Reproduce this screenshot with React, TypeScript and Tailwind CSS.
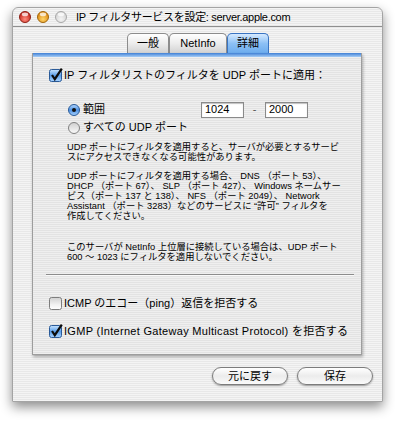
import React from 'react'

// Aqua-style "IP filter service" settings window (Mac OS X 10.2 era)

const stripes =
  'bg-[repeating-linear-gradient(180deg,#f4f4f4_0px,#f4f4f4_1px,#e8e8e8_1px,#e8e8e8_2px)]'
const panelStripes =
  'bg-[repeating-linear-gradient(180deg,#efefef_0px,#efefef_1px,#e3e3e3_1px,#e3e3e3_2px)]'

function Light({ from, to, edge }: { from: string; to: string; edge: string }) {
  return (
    <svg width="12" height="12" viewBox="0 0 12 12">
      <defs>
        <radialGradient id={`l${from}`} cx="0.5" cy="0.7" r="0.6">
          <stop offset="0" stopColor={to} />
          <stop offset="1" stopColor={from} />
        </radialGradient>
      </defs>
      <circle cx="6" cy="6" r="5.5" fill={`url(#l${from})`} stroke={edge} />
      <ellipse cx="6" cy="3.4" rx="3.2" ry="1.8" fill="#fff" opacity="0.75" />
    </svg>
  )
}

function Checkbox({ checked }: { checked: boolean }) {
  return (
    <svg width="14" height="14" viewBox="0 0 14 14" className="shrink-0">
      <defs>
        <linearGradient id="cbOn" x1="0" y1="0" x2="0" y2="1">
          <stop offset="0" stopColor="#c9e4ff" />
          <stop offset="0.5" stopColor="#5b9fea" />
          <stop offset="1" stopColor="#a9d3ff" />
        </linearGradient>
        <linearGradient id="cbOff" x1="0" y1="0" x2="0" y2="1">
          <stop offset="0" stopColor="#d0d0d0" />
          <stop offset="0.6" stopColor="#f2f2f2" />
          <stop offset="1" stopColor="#ffffff" />
        </linearGradient>
      </defs>
      <rect
        x="0.5"
        y="1.5"
        width="12"
        height="12"
        rx="2"
        fill={checked ? 'url(#cbOn)' : 'url(#cbOff)'}
        stroke={checked ? '#2a5a98' : '#7d7d7d'}
      />
      {checked && <path d="M3 7 L5.8 11.2 L12.8 0.6" stroke="#0d0d0d" strokeWidth="2.2" fill="none" />}
    </svg>
  )
}

function Radio({ on }: { on: boolean }) {
  return (
    <svg width="12" height="12" viewBox="0 0 12 12" className="shrink-0">
      <defs>
        <linearGradient id="rOn" x1="0" y1="0" x2="0" y2="1">
          <stop offset="0" stopColor="#b7d9ff" />
          <stop offset="0.5" stopColor="#4f93e4" />
          <stop offset="1" stopColor="#a7d2ff" />
        </linearGradient>
        <linearGradient id="rOff" x1="0" y1="0" x2="0" y2="1">
          <stop offset="0" stopColor="#cfcfcf" />
          <stop offset="1" stopColor="#fbfbfb" />
        </linearGradient>
      </defs>
      <circle cx="6" cy="6" r="5.5" fill={on ? 'url(#rOn)' : 'url(#rOff)'} stroke={on ? '#2a5a98' : '#808080'} />
      {on && <circle cx="6" cy="6" r="2" fill="#111" />}
    </svg>
  )
}

function Tab({ label, active }: { label: string; active?: boolean }) {
  return (
    <div
      className={
        'flex h-[20px] items-center justify-center rounded-t-[5px] border border-b-0 text-[11px] ' +
        (active
          ? 'border-[#3a74c2] bg-gradient-to-b from-[#d6eaff] via-[#8cc0f5] to-[#6cacee]'
          : 'border-[#8c8c8c] bg-gradient-to-b from-[#ffffff] via-[#ececec] to-[#d2d2d2]')
      }
    >
      {label}
    </div>
  )
}

function PushButton({ label }: { label: string }) {
  return (
    <div className="flex h-[18px] w-[76px] items-center justify-center rounded-full border border-[#7c7c7c] bg-gradient-to-b from-[#ffffff] via-[#ececec] to-[#fafafa] text-[11px] shadow-[0_1px_2px_rgba(0,0,0,0.35)]">
      {label}
    </div>
  )
}

export default function App() {
  return (
    <div className="h-[421px] w-[395px] bg-white pl-[12px] pt-[7px] font-['Liberation_Sans','Noto_Sans_CJK_JP',sans-serif] text-black">
      <div
        className={`flex h-[395px] w-[371px] flex-col rounded-t-[6px] border border-[#a4a4a4] ${stripes} shadow-[0_5px_12px_rgba(0,0,0,0.45)]`}
      >
        {/* Title bar */}
        <div className="flex h-[19px] items-center gap-[6px] border-b border-[#8f8f8f] pl-[6px]">
          <Light from="#c5261c" to="#ff8c7e" edge="#8d2218" />
          <Light from="#dd8a12" to="#ffd56a" edge="#a0670f" />
          <Light from="#d4d4d4" to="#f4f4f4" edge="#a8a8a8" />
          <span className="ml-[3px] pt-[1px] text-[11px] leading-none tracking-[-0.3px]">
            IP フィルタサービスを設定: server.apple.com
          </span>
        </div>

        {/* Tabs */}
        <div className="mt-[6px] flex justify-center pl-[1px]">
          <div className="w-[42px]">
            <Tab label="一般" />
          </div>
          <div className="w-[58px]">
            <Tab label="NetInfo" />
          </div>
          <div className="w-[42px]">
            <Tab label="詳細" active />
          </div>
        </div>

        {/* Panel */}
        <div
          className={`ml-[19px] flex h-[302px] w-[330px] flex-col border-x border-b border-[#9d9d9d] ${panelStripes} shadow-[1px_2px_3px_rgba(0,0,0,0.3)]`}
        >
          <div className="h-[4px] bg-gradient-to-b from-[#3f7fd4] to-[#a6cdf6]" />

          <div className="mt-[10px] flex items-center gap-[1px] pl-[16px] text-[11px]">
            <Checkbox checked />
            <span>IP フィルタリストのフィルタを UDP ポートに適用：</span>
          </div>

          <div className="mt-[18px] flex h-[16px] items-center pl-[35px] text-[11px]">
            <Radio on />
            <span className="ml-[3px] w-[118px]">範囲</span>
            <div className="flex h-[16px] w-[43px] items-center border border-[#8a8a8a] bg-white pl-[3px] shadow-[inset_0_1px_1px_rgba(0,0,0,0.25)]">
              1024
            </div>
            <span className="w-[21px] text-center text-[#555]">-</span>
            <div className="flex h-[16px] w-[43px] items-center border border-[#8a8a8a] bg-white pl-[3px] shadow-[inset_0_1px_1px_rgba(0,0,0,0.25)]">
              2000
            </div>
          </div>

          <div className="mt-[3px] flex h-[14px] items-center pl-[35px] text-[11px]">
            <Radio on={false} />
            <span className="ml-[3px]">すべての UDP ポート</span>
          </div>

          <div className="mt-[7px] whitespace-nowrap pl-[34px] text-[9.3px] leading-[10px]">
            <div>UDP ポートにフィルタを適用すると、サーバが必要とするサービ</div>
            <div>スにアクセスできなくなる可能性があります。</div>
          </div>

          <div className="mt-[9px] whitespace-nowrap pl-[34px] text-[9.3px] leading-[10px]">
            <div>UDP ポートにフィルタを適用する場合、 DNS （ポート 53）、</div>
            <div>DHCP （ポート 67）、 SLP （ポート 427）、 Windows ネームサー</div>
            <div>ビス（ポート 137 と 138）、 NFS （ポート 2049）、 Network</div>
            <div>Assistant （ポート 3283）などのサービスに “許可” フィルタを</div>
            <div>作成してください。</div>
          </div>

          <div className="mt-[21px] whitespace-nowrap pl-[34px] text-[9.3px] leading-[10px]">
            <div>このサーバが NetInfo 上位層に接続している場合は、UDP ポート</div>
            <div>600 〜 1023 にフィルタを適用しないでください。</div>
          </div>

          <div className="ml-[13px] mt-[12px] h-[2px] w-[308px] border-t border-b border-t-[#8c8c8c] border-b-[#fafafa]" />

          <div className="mt-[19px] flex items-center gap-[1px] pl-[16px] text-[11px]">
            <Checkbox checked={false} />
            <span>ICMP のエコー（ping）返信を拒否する</span>
          </div>

          <div className="mt-[12px] flex items-center gap-[1px] pl-[16px] text-[11px]">
            <Checkbox checked />
            <span className="tracking-[0.3px]">IGMP (Internet Gateway Multicast Protocol) を拒否する</span>
          </div>
        </div>

        {/* Buttons */}
        <div className="mr-[9px] mt-[12px] flex justify-end gap-[9px]">
          <PushButton label="元に戻す" />
          <PushButton label="保存" />
        </div>
      </div>
    </div>
  )
}
